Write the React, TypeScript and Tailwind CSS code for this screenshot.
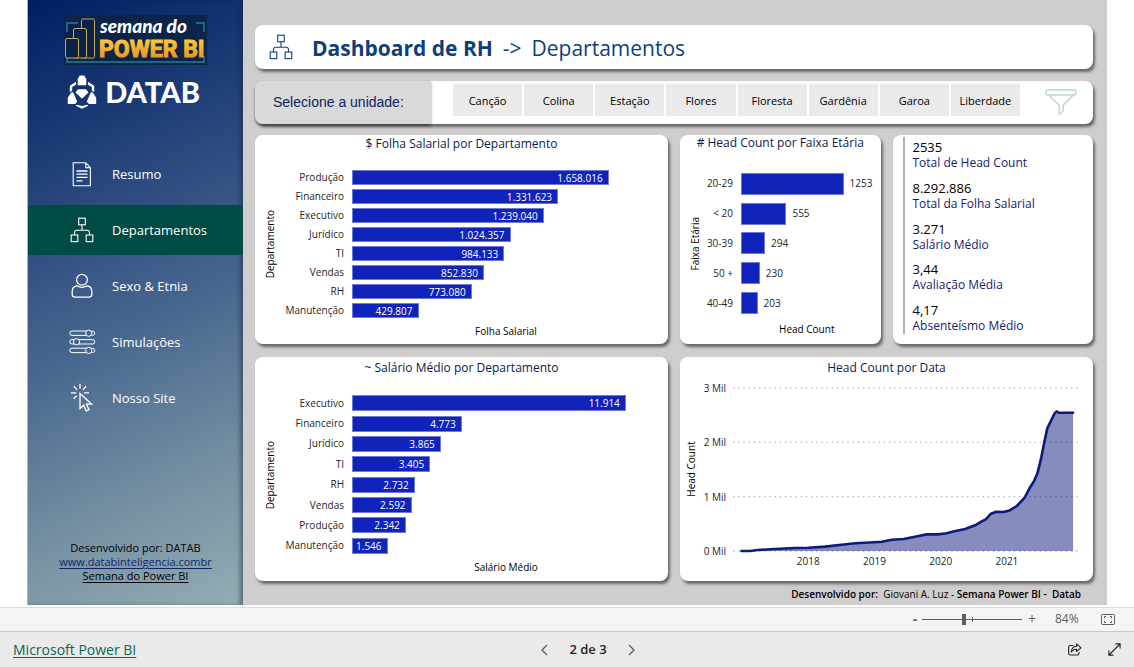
import React from "react";

type Bar = { label: string; value: number; text: string };

const payroll: Bar[] = [
  { label: "Produção", value: 1658016, text: "1.658.016" },
  { label: "Financeiro", value: 1331623, text: "1.331.623" },
  { label: "Executivo", value: 1239040, text: "1.239.040" },
  { label: "Jurídico", value: 1024357, text: "1.024.357" },
  { label: "TI", value: 984133, text: "984.133" },
  { label: "Vendas", value: 852830, text: "852.830" },
  { label: "RH", value: 773080, text: "773.080" },
  { label: "Manutenção", value: 429807, text: "429.807" },
];

const averageSalary: Bar[] = [
  { label: "Executivo", value: 11914, text: "11.914" },
  { label: "Financeiro", value: 4773, text: "4.773" },
  { label: "Jurídico", value: 3865, text: "3.865" },
  { label: "TI", value: 3405, text: "3.405" },
  { label: "RH", value: 2732, text: "2.732" },
  { label: "Vendas", value: 2592, text: "2.592" },
  { label: "Produção", value: 2342, text: "2.342" },
  { label: "Manutenção", value: 1546, text: "1.546" },
];

const ages: Bar[] = [
  { label: "20-29", value: 1253, text: "1253" },
  { label: "< 20", value: 555, text: "555" },
  { label: "30-39", value: 294, text: "294" },
  { label: "50 +", value: 230, text: "230" },
  { label: "40-49", value: 203, text: "203" },
];

const kpis = [
  ["2535", "Total de Head Count"],
  ["8.292.886", "Total da Folha Salarial"],
  ["3.271", "Salário Médio"],
  ["3,44", "Avaliação Média"],
  ["4,17", "Absenteísmo Médio"],
];

const units = ["Canção", "Colina", "Estação", "Flores", "Floresta", "Gardênia", "Garoa", "Liberdade"];

const headCount: [number, number][] = [
  [2016.99, 0], [2017.12, 0], [2017.24, 18], [2017.5, 37], [2017.8, 55], [2018, 61],
  [2018.25, 80], [2018.5, 116], [2018.71, 141], [2018.86, 153], [2019.11, 171],
  [2019.26, 208], [2019.44, 220], [2019.61, 263], [2019.79, 306], [2019.96, 306],
  [2020.09, 325], [2020.19, 361], [2020.37, 404], [2020.52, 472], [2020.62, 545],
  [2020.68, 582], [2020.76, 686], [2020.84, 723], [2020.95, 716], [2021.04, 747],
  [2021.15, 827], [2021.27, 986], [2021.355, 1182], [2021.405, 1274], [2021.46, 1427],
  [2021.516, 1702], [2021.567, 2009], [2021.61, 2253], [2021.67, 2407], [2021.72, 2529],
  [2021.753, 2566], [2021.79, 2541], [2022, 2541],
];

const card = "rounded-lg bg-white shadow-[2px_3px_3px_rgba(0,0,0,0.5)]";

function OrgIcon({ className }: { className: string }) {
  return (
    <svg viewBox="0 0 24 26" className={className} fill="none" stroke="currentColor" strokeWidth="1.1" aria-hidden="true">
      <rect x="8.7" y="1.2" width="6.6" height="6.6" />
      <rect x="1.2" y="18" width="6.6" height="6.6" />
      <rect x="16.2" y="18" width="6.6" height="6.6" />
      <path d="M12 7.8v5.4M4.5 18v-2.6a2.2 2.2 0 0 1 2.2-2.2h10.6a2.2 2.2 0 0 1 2.2 2.2V18" />
    </svg>
  );
}

function DocIcon() {
  return (
    <svg viewBox="0 0 20 25" className="h-[25px] w-5" fill="none" stroke="currentColor" strokeWidth="1.1" aria-hidden="true">
      <path d="M1.2.8h12.6l4.6 4.8v18.2H1.2zM13.8.8v4.8h4.6" />
      <path d="M4.5 9h11M4.5 12.2h11M4.5 15.4h11M4.5 18.8h6" strokeWidth="1.3" />
    </svg>
  );
}

function PersonIcon() {
  return (
    <svg viewBox="0 0 22 26" className="h-[26px] w-[22px]" fill="none" stroke="currentColor" strokeWidth="1.3" aria-hidden="true">
      <circle cx="11" cy="6.8" r="5.4" />
      <path d="M6.200 12.800C3 13 1.200 15.500 1.200 18.500v2.800c0 1.700 1.100 2.900 2.900 2.900h13.800c1.800 0 2.900-1.200 2.900-2.900v-2.800c0-3-1.800-5.500-5-5.700-2.500 2.200-7.100 2.200-9.600 0z" />
    </svg>
  );
}

function SlidersIcon() {
  return (
    <svg viewBox="0 0 27 26" className="h-[26px] w-[27px]" fill="none" stroke="currentColor" strokeWidth="1" aria-hidden="true">
      <path d="M17 2H3a2.200 2.200 0 0 0 0 4.400h14M22.500 2h1a2.200 2.200 0 0 1 0 4.400h-1" />
      <circle cx="19.700" cy="4.200" r="3.100" />
      <path d="M5 10.600H3A2.200 2.200 0 0 0 3 15h2M10 10.600h13.500a2.200 2.200 0 0 1 0 4.400H10" />
      <circle cx="7.500" cy="12.800" r="3.100" />
      <path d="M17 19.200H3a2.200 2.200 0 0 0 0 4.400h14M22.500 19.200h1a2.200 2.200 0 0 1 0 4.400h-1" />
      <circle cx="19.700" cy="21.400" r="3.100" />
    </svg>
  );
}

function ClickIcon() {
  return (
    <svg viewBox="0 0 24 30" className="h-[30px] w-6" fill="none" stroke="currentColor" strokeWidth="1.3" aria-hidden="true">
      <path d="M10 10.500v15l3.700-3.300 2.500 5.800 2.800-1.300-2.500-5.500h5.200z" />
      <path d="M10 .800v5M4 3.200l3 3.600M16 3.200l-3 3.600M.900 9.800h5.300M14 9.800h5M3.600 15.800l3.200-3" />
    </svg>
  );
}

function PowerBiWeekLogo() {
  return (
    <svg viewBox="0 0 143 50" className="h-[50px] w-[143px]" role="img" aria-label="Semana do Power BI">
      <defs>
        <linearGradient id="gold" x1="0" y1="0" x2="0" y2="1">
          <stop offset="0" stopColor="#ffd341" />
          <stop offset="1" stopColor="#e58a1d" />
        </linearGradient>
      </defs>
      <rect width="143" height="50" fill="#0c2449" />
      <path d="M3 17V8h11M132 8h8v9M3 41v6h137v-6" fill="none" stroke="#1c8094" strokeWidth="1.500" />
      <g fill="#0b2145" stroke="#c9aa55" strokeWidth="1">
        <rect x="17.500" y="4" width="13" height="39" rx="1.500" />
        <rect x="9.500" y="13.500" width="13" height="29.500" rx="1.500" />
        <rect x="1.500" y="23.500" width="13" height="19.500" rx="1.500" />
      </g>
      <text x="36" y="18" fill="#fff" fontSize="19" fontWeight="900" fontStyle="italic" className="font-['Lato',sans-serif]">semana do</text>
      <text x="35" y="42" fill="url(#gold)" stroke="url(#gold)" strokeWidth="1" fontSize="23" fontWeight="700" className="font-['Roboto',sans-serif]">POWER BI</text>
    </svg>
  );
}

function DatabLogo() {
  return (
    <div className="flex items-center gap-2 text-white">
      <svg viewBox="0 0 30 34" className="h-[34px] w-[30px] shrink-0" aria-hidden="true">
        <g fill="currentColor">
          <path d="M12.800.500h4.400l2.100 3.500v6.200H10.700V4z" />
          <path d="M.800 29v-6.300l3.400-5.200 1.900-.300 4.100 9.300-2 2.500z" />
          <path d="M29.200 29v-6.300l-3.400-5.200-1.900-.300-4.100 9.300 2 2.500z" />
          <path d="M11 14.200h8l2.500 3.200L15 23.800l-6.500-6.400z" />
          <path d="M9 6.700v3.100l-3.800 2.200v3.800L2.800 17v-6.300zM21 6.700v3.100l3.800 2.200v3.800l2.400 1.200v-6.300zM9.500 29.700l5.500 1.200 5.500-1.200.7 1L15 33.700l-6.200-3z" />
        </g>
      </svg>
      <span className="font-['Lato',sans-serif] text-[29px] leading-9 font-black">DATAB</span>
    </div>
  );
}

const nav = [
  { label: "Resumo", icon: <DocIcon /> },
  { label: "Departamentos", icon: <OrgIcon className="h-[26px] w-6" />, active: true },
  { label: "Sexo & Etnia", icon: <PersonIcon /> },
  { label: "Simulações", icon: <SlidersIcon /> },
  { label: "Nosso Site", icon: <ClickIcon /> },
];

function Sidebar() {
  return (
    <aside className="flex w-[216px] shrink-0 flex-col border-l border-[#a5b4cb] bg-[linear-gradient(155deg,#001f62_0%,#1b3b75_22%,#4a6990_55%,#7792a3_80%,#93adb2_100%)] shadow-[inset_-4px_0_4px_-1px_rgba(20,35,60,0.45)]">
      <div className="flex flex-col items-center pt-[15px]">
        <PowerBiWeekLogo />
        <div className="mt-[9px] pr-1"><DatabLogo /></div>
      </div>
      <nav className="mt-[39px] flex flex-col gap-[6px]">
        {nav.map((item) => (
          <a
            key={item.label}
            href="#"
            aria-current={item.active ? "page" : undefined}
            className={"flex h-[50px] items-center pl-[38px] text-[13px] text-white " + (item.active ? "bg-[#004b43]" : "")}
          >
            <span className="flex w-8 justify-center">{item.icon}</span>
            <span className="ml-[14px] pt-[2px]">{item.label}</span>
          </a>
        ))}
      </nav>
      <div className="mt-auto pb-[22px] text-center text-[11px] leading-[14px] text-black">
        <p>Desenvolvido por: DATAB</p>
        <p><a href="#" className="text-[#10266b] underline underline-offset-2">www.databinteligencia.combr</a></p>
        <p><a href="#" className="underline underline-offset-2">Semana do Power BI</a></p>
      </div>
    </aside>
  );
}

function ChartTitle({ children }: { children: React.ReactNode }) {
  return <h2 className="text-center text-xs leading-4 text-[#0b1a4d]">{children}</h2>;
}

type BarChartProps = {
  title: string;
  category: string;
  measure: string;
  data: Bar[];
  domain: number;
  plot: string;
  labels: string;
  bar: string;
  inside?: boolean;
};

function BarChart({ title, category, measure, data, domain, plot, labels, bar, inside }: BarChartProps) {
  return (
    <>
      <ChartTitle>{title}</ChartTitle>
      <div className="flex flex-1 pt-[13px] pr-2 pl-1">
        <div className="flex w-[22px] items-center justify-center pb-5">
          <span className="rotate-180 text-[10px] leading-3 whitespace-nowrap text-black [writing-mode:vertical-rl]">{category}</span>
        </div>
        <div className="flex-1">
          <div className={"flex flex-col text-[10px] " + plot}>
            {data.map((d) => (
              <div key={d.label} className="flex flex-1 items-center">
                <span className={"shrink-0 pr-2 text-right whitespace-nowrap text-[#252423] " + labels}>{d.label}</span>
                <div className="flex flex-1 items-center">
                  <div
                    className={"flex shrink-0 items-center justify-end border border-[#6f79d6] bg-[#1023ba] pt-px pr-[5px] text-white " + bar}
                    style={{ width: `${(d.value / domain) * 100}%` }}
                  >
                    {inside && <span className="font-medium">{d.text}</span>}
                  </div>
                  {!inside && <span className="ml-[6px] text-[#252423]">{d.text}</span>}
                </div>
              </div>
            ))}
          </div>
          <div className="flex">
            <span className={"shrink-0 " + labels} />
            <span className="flex-1 pt-[3px] text-center text-[10px] leading-4 text-black">{measure}</span>
          </div>
        </div>
      </div>
    </>
  );
}

function AreaChart() {
  const x = (year: number) => 128.3 + (year - 2018) * 66.2;
  const y = (count: number) => 171 - count * 0.0544;
  const line = headCount.map(([year, count]) => `${x(year).toFixed(1)},${y(count).toFixed(1)}`).join(" ");
  return (
    <svg viewBox="0 0 413 190" className="w-full" role="img" aria-label="Head Count por Data">
      {[0, 1000, 2000, 3000].map((tick) => (
        <g key={tick}>
          <line x1="53" x2="399" y1={y(tick)} y2={y(tick)} stroke="#b3b0ad" strokeWidth="1.300" strokeDasharray="1.300 3.900" />
          <text x="46" y={y(tick) + 4} textAnchor="end" fontSize="10" fill="#252423">{tick / 1000} Mil</text>
        </g>
      ))}
      <polygon points={`${x(2016.99)},171 ${line} ${x(2022)},171`} fill="#0d1a7e" fillOpacity="0.5" />
      <polyline points={line} fill="none" stroke="#0d1a7e" strokeWidth="2.600" strokeLinejoin="round" strokeLinecap="round" />
      {[2018, 2019, 2020, 2021].map((year) => (
        <text key={year} x={x(year)} y="185" textAnchor="middle" fontSize="10" fill="#252423">{year}</text>
      ))}
      <text transform="translate(15 89) rotate(-90)" textAnchor="middle" fontSize="10" fill="#000">Head Count</text>
    </svg>
  );
}

function UnitFilter() {
  return (
    <section className={"mt-3 flex h-[43px] " + card}>
      <div className="flex w-[176px] shrink-0 items-center rounded-l-lg bg-[#d9d9d9] pb-px pl-[18px] font-['Liberation_Sans',sans-serif] text-sm text-[#0f1f5c] shadow-[0_2px_3px_rgba(0,0,0,0.4)]">
        Selecione a unidade:
      </div>
      <div className="flex flex-1 gap-[2px] pt-[3px] pb-2 pl-[22px]">
        {units.map((unit) => (
          <button key={unit} type="button" className="flex-1 bg-[#eaeaea] pt-[2px] text-[11px] text-black">{unit}</button>
        ))}
      </div>
      <div className="flex w-[73px] justify-center pt-2 pl-2">
        <svg viewBox="0 0 32 27" className="h-[27px] w-8" fill="none" stroke="#b9d6cf" strokeWidth="1.400" strokeLinejoin="round" aria-hidden="true">
          <rect x="1" y="1" width="30" height="5" rx="1.500" />
          <path d="M3.500 6l10.700 10.300v9.200l4-3.700v-5.500L28.500 6" />
        </svg>
      </div>
    </section>
  );
}

function Report() {
  return (
    <div className="flex flex-1 flex-col bg-[#d0cdce] pt-[25px] pr-[14px] pl-3">
      <header className={"flex h-[44px] items-center pl-[14px] text-[#0d3f7c] " + card}>
        <OrgIcon className="h-[26px] w-6" />
        <h1 className="ml-[19px] flex gap-[10px] pt-px text-[21px] leading-7">
          <b>Dashboard de RH</b>
          <span>-&gt;</span>
          <span>Departamentos</span>
        </h1>
      </header>
      <UnitFilter />
      <div className="mt-[11px] grid grid-cols-2 gap-x-3 gap-y-[13px]">
        <section className={"flex h-[209px] flex-col pt-px " + card}>
          <BarChart title="$ Folha Salarial por Departamento" category="Departamento" measure="Folha Salarial"
            data={payroll} domain={1990000} plot="mt-[3px] h-[152px]" labels="w-[71px]" bar="h-[15px]" inside />
        </section>
        <div className="grid grid-cols-2 gap-3">
          <section className={"flex h-[209px] flex-col " + card}>
            <BarChart title="# Head Count por Faixa Etária" category="Faixa Etária" measure="Head Count"
              data={ages} domain={1606} plot="mt-[5px] h-[149px]" labels="w-[35px]" bar="h-[22px]" />
          </section>
          <section className={"pt-[2px] pl-[10px] " + card}>
            <dl className="flex h-[197px] flex-col justify-between border-l-2 border-[#b3b0ad] pt-[2px] pl-2 text-xs leading-4">
              {kpis.map(([value, label]) => (
                <div key={label} className="flex flex-col-reverse">
                  <dt className="text-[#161b70]">{label}</dt>
                  <dd className="text-[13px] leading-4 text-black">{value}</dd>
                </div>
              ))}
            </dl>
          </section>
        </div>
        <section className={"flex h-[224px] flex-col pt-[3px] " + card}>
          <BarChart title="~ Salário Médio por Departamento" category="Departamento" measure="Salário Médio"
            data={averageSalary} domain={13400} plot="mt-1 h-[163px]" labels="w-[71px]" bar="h-4" inside />
        </section>
        <section className={"pt-[3px] " + card}>
          <ChartTitle>Head Count por Data</ChartTitle>
          <div className="pt-1"><AreaChart /></div>
        </section>
      </div>
      <p className="flex-1 pt-[5px] pr-3 pb-[3px] text-right text-[10px] leading-4 whitespace-pre text-black">
        <b className="font-semibold">Desenvolvido por:</b>{"  Giovani A. Luz - "}<b className="font-semibold">{"Semana Power BI -  Datab"}</b>
      </p>
    </div>
  );
}

function ZoomBar() {
  return (
    <div className="flex h-6 items-center justify-end border-t border-[#dcdcdc] bg-[#f4f4f4] pr-[19px] pb-px text-[#605e5c]">
      <button type="button" aria-label="Diminuir zoom" className="w-[14px] text-sm leading-5 font-bold">-</button>
      <div className="relative flex w-[100px] items-center">
        <input
          type="range"
          aria-label="Zoom"
          defaultValue={42}
          className="h-3 w-full appearance-none bg-[linear-gradient(#605e5c,#605e5c)] bg-[length:100%_1px] bg-center bg-no-repeat [&::-webkit-slider-thumb]:h-[11px] [&::-webkit-slider-thumb]:w-1 [&::-webkit-slider-thumb]:appearance-none [&::-webkit-slider-thumb]:bg-[#605e5c]"
        />
        <span className="absolute left-1/2 h-[5px] w-px bg-[#605e5c]" />
      </div>
      <button type="button" aria-label="Aumentar zoom" className="w-5 text-sm leading-5">+</button>
      <span className="w-12 pl-[13px] text-xs">84%</span>
      <button type="button" aria-label="Ajustar à página" className="ml-[11px]">
        <svg viewBox="0 0 14 11" className="h-[11px] w-[14px]" fill="none" stroke="currentColor" strokeWidth="1">
          <rect x=".5" y=".5" width="13" height="10" rx="1" />
          <path d="M5 2.500H3.500v1.700M9 2.500h1.500v1.700M5 8.500H3.500V6.800M9 8.500h1.500V6.800" />
        </svg>
      </button>
    </div>
  );
}

function StatusBar() {
  return (
    <footer className="grid flex-1 grid-cols-3 items-center border-t border-[#c8c8c8] bg-[#eaeaea] px-[13px]">
      <a href="#" className="text-sm text-[#0b6556] underline underline-offset-2">Microsoft Power BI</a>
      <div className="flex items-center justify-center gap-[21px] pl-[42px] text-[13px] font-semibold text-[#252423]">
        <button type="button" aria-label="Página anterior">
          <svg viewBox="0 0 7 12" className="h-3 w-[7px]" fill="none" stroke="#4a5a66" strokeWidth="1.200"><path d="M6 1L1 6l5 5" /></svg>
        </button>
        <span>2 de 3</span>
        <button type="button" aria-label="Próxima página">
          <svg viewBox="0 0 7 12" className="h-3 w-[7px]" fill="none" stroke="#4a5a66" strokeWidth="1.200"><path d="M1 1l5 5-5 5" /></svg>
        </button>
      </div>
      <div className="flex items-center justify-end gap-[26px] text-[#252423]">
        <button type="button" aria-label="Compartilhar">
          <svg viewBox="0 0 14 13" className="h-[13px] w-[14px]" fill="none" stroke="currentColor" strokeWidth="1.100" strokeLinejoin="round">
            <path d="M5.500 2.500H2.200C1.300 2.500.700 3.100.700 4v6.500c0 .9.600 1.500 1.500 1.500h7.300c.9 0 1.500-.6 1.500-1.500V9" />
            <path d="M8.500 1l4.500 3.800L8.500 8.500V6.300C6 6.200 4.500 7 3.300 9c.2-3.500 2-5.600 5.200-5.800z" />
          </svg>
        </button>
        <button type="button" aria-label="Tela inteira">
          <svg viewBox="0 0 13 13" className="h-[13px] w-[13px]" fill="none" stroke="currentColor" strokeWidth="1.100">
            <path d="M1 12L12 1M7.500.900H12.100V5.500M.900 7.500v4.600H5.500" />
          </svg>
        </button>
      </div>
    </footer>
  );
}

export default function App() {
  return (
    <div className="flex min-h-screen flex-col bg-white font-['Open_Sans','Noto_Sans',sans-serif]">
      <main className="mx-[27px] mb-[2px] flex">
        <Sidebar />
        <Report />
      </main>
      <ZoomBar />
      <StatusBar />
    </div>
  );
}
